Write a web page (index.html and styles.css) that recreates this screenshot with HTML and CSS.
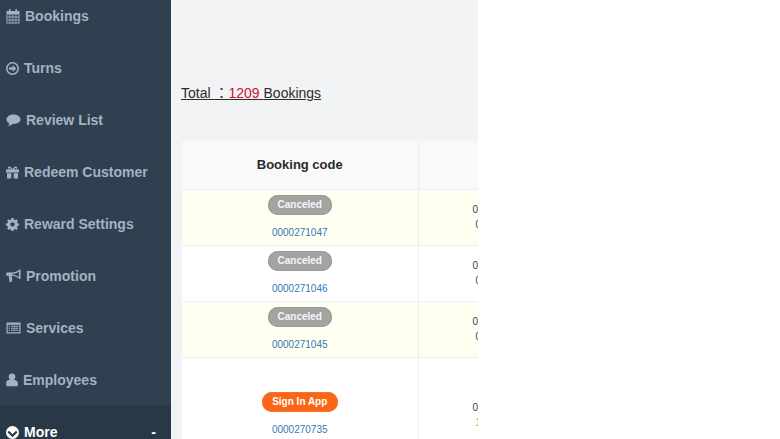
FILE: index.html
```html
<!DOCTYPE html>
<html lang="en">
<head>
<meta charset="utf-8">
<title>Bookings</title>
<link rel="stylesheet" href="styles.css">
</head>
<body>
<div class="page">
  <nav class="sidebar">
    <a class="nav-item"><svg class="ico wide" viewBox="0 0 14 15"><path fill="currentColor" fill-rule="evenodd" d="M3 0h1.500v2h5V0H11v2h2.500v12.500H.5V2H3zM1.300 5.500v2h2.300v-2zm3 0v2h2.300v-2zm3 0v2h2.300v-2zm3 0v2h2.300v-2zm-9 3v2h2.300v-2zm3 0v2h2.300v-2zm3 0v2h2.300v-2zm3 0v2h2.300v-2zm-9 3v2h2.300v-2zm3 0v2h2.300v-2zm3 0v2h2.300v-2zm3 0v2h2.300v-2z"/></svg><span>Bookings</span></a>
    <a class="nav-item"><svg class="ico" viewBox="0 0 13 13"><path fill="currentColor" fill-rule="evenodd" d="M6.500 0a6.500 6.500 0 1 1 0 13 6.500 6.500 0 0 1 0-13zm0 1.600a4.900 4.900 0 1 0 0 9.800 4.900 4.900 0 0 0 0-9.800zM6.700 3l3.500 3.500L6.700 10V7.700H3V5.300h3.700z"/></svg><span>Turns</span></a>
    <a class="nav-item"><svg class="ico bubble" viewBox="0 0 15 14"><path fill="currentColor" d="M7.500 1.500c4 0 7 2.200 7 4.800S11.500 11 7.500 11H6.500c-1 1-2.500 1.700-4.500 2 .8-.8 1.200-1.600 1.300-2.600C1.500 9.600.5 8 .5 6.300.5 3.700 3.500 1.500 7.500 1.500z"/></svg><span>Review List</span></a>
    <a class="nav-item"><svg class="ico" viewBox="0 0 13 13"><path fill="currentColor" fill-rule="evenodd" d="M0 3.500h3.200C2 3 1.500 2.300 1.800 1.500c.4-1 1.700-1.200 2.700-.5.700.5 1.600 1.500 2 2.200.4-.7 1.300-1.700 2-2.200 1-.7 2.300-.5 2.700.5.300.8-.2 1.500-1.400 2H13v3H0zM3.200 2c-.4 0-.6.500-.2.900.3.300 1.100.5 2 .6C4.600 2.700 4 2 3.200 2zm6.600 0C9 2 8.400 2.700 8 3.500c.9-.1 1.700-.3 2-.6.400-.4.200-.9-.2-.9zM1 7.300h4.300V12.500H1zm6.700 0H12v5.200H7.700z"/></svg><span>Redeem Customer</span></a>
    <a class="nav-item"><svg class="ico" viewBox="0 0 14 14"><path fill="currentColor" fill-rule="evenodd" d="M5.700 0h2.600l.4 2 1.200.5 1.700-1.100 1.800 1.800-1.100 1.700.5 1.200 2 .4v2.600l-2 .4-.5 1.200 1.100 1.700-1.800 1.800-1.700-1.100-1.200.5-.4 2H5.700l-.4-2-1.200-.5-1.700 1.100L.6 12.400l1.100-1.700-.5-1.200-2-.4V6.500l2-.4.500-1.200L.6 3.200l1.800-1.800 1.700 1.100 1.200-.5zM7 4.900a2.600 2.600 0 1 0 0 5.200 2.600 2.600 0 0 0 0-5.200z" transform="translate(.7 .1) scale(.9)"/></svg><span>Reward Settings</span></a>
    <a class="nav-item"><svg class="ico bubble" viewBox="0 0 15 14"><path fill="currentColor" fill-rule="evenodd" d="M13.500 .5h1v9.500h-1c-2-2-5-3-8-3.200l.8 3.700-.8 2.500H3.500L2.700 6.700H1c-.5 0-.8-.4-.8-.8V4.200c0-.5.300-.8.800-.8h4.500c3 0 6-1 8-2.900zm-.6 1.900C11.300 3.800 9 4.600 6.500 4.800v1c2.500.2 4.800 1 6.400 2.400z"/></svg><span>Promotion</span></a>
    <a class="nav-item"><svg class="ico bubble" viewBox="0 0 15 14"><path fill="currentColor" fill-rule="evenodd" d="M.5 1.500h14v11H.5zm1.200 2.300v7.500h11.600V3.800zm1 1H4v1H2.700zm2.300 0h7.300v1H5zm-2.300 2H4v1H2.700zm2.300 0h7.300v1H5zm-2.300 2H4v1H2.700zm2.300 0h7.300v1H5z"/></svg><span>Services</span></a>
    <a class="nav-item"><svg class="ico narrow" viewBox="0 0 12 14"><path fill="currentColor" d="M6 .5a3.300 3.300 0 0 1 3.300 3.400c0 1.100-.5 2.100-1.300 2.800 2.100.3 3.800 1.400 3.800 3.400v2.300c0 .5-.4.900-1 .9H1.200c-.6 0-1-.4-1-.9V10c0-2 1.700-3.100 3.800-3.400-.8-.7-1.300-1.700-1.300-2.800A3.300 3.300 0 0 1 6 .5z"/></svg><span>Employees</span></a>
    <a class="nav-item is-open"><svg class="ico" viewBox="0 0 13 13"><path fill="currentColor" fill-rule="evenodd" d="M6.500 0a6.500 6.500 0 1 1 0 13 6.500 6.500 0 0 1 0-13zM3 4.700 1.500 6.200l5 5 5-5L10 4.700 6.500 8.200z"/></svg><span>More</span><b class="minus">-</b></a>
  </nav>
  <main class="content">
    <p class="total"><u>Total <span class="colon">：</span><span class="count">1209 </span>Bookings</u></p>
    <table class="grid">
      <thead>
        <tr><th class="col-code">Booking code</th><th class="col-next"></th></tr>
      </thead>
      <tbody>
        <tr class="row tint">
          <td class="col-code"><span class="pill grey">Canceled</span><a class="code">0000271047</a></td>
          <td class="col-next"><div class="cut">0</div><div class="cut second">0</div></td>
        </tr>
        <tr class="row">
          <td class="col-code"><span class="pill grey">Canceled</span><a class="code">0000271046</a></td>
          <td class="col-next"><div class="cut">0</div><div class="cut second">0</div></td>
        </tr>
        <tr class="row tint">
          <td class="col-code"><span class="pill grey">Canceled</span><a class="code">0000271045</a></td>
          <td class="col-next"><div class="cut">0</div><div class="cut second">0</div></td>
        </tr>
        <tr class="row tall">
          <td class="col-code"><span class="pill orange">Sign In App</span><a class="code">0000270735</a></td>
          <td class="col-next"><div class="cut">0</div><div class="cut second amber">1</div></td>
        </tr>
      </tbody>
    </table>
  </main>
  <div class="blank"></div>
</div>
</body>
</html>
```
FILE: styles.css
```css
* { box-sizing: border-box; }
html, body { margin: 0; height: 100%; overflow: hidden; background: #fff; }
body { font-family: "Liberation Sans", Arial, sans-serif; }
.page { display: flex; width: 780px; height: 439px; overflow: hidden; }

.sidebar { width: 171px; flex: none; height: 439px; overflow: hidden; background: #2f4050; display: flex; flex-direction: column; }
.nav-item { flex: none; height: 52px; display: flex; align-items: center; gap: 5px; padding: 0 6px; color: #a7b1c2; font-size: 14px; font-weight: 700; }
.nav-item:first-child { margin-top: -10px; }
.ico { width: 13px; height: 13px; flex: none; }
.ico.wide { width: 14px; height: 15px; }
.ico.bubble { width: 15px; height: 14px; }
.ico.narrow { width: 12px; height: 14px; }
.is-open { color: #fff; background: #293846; }
.minus { margin-left: auto; margin-right: 9px; }

.content { width: 307px; flex: none; background: #f1f3f5; padding: 0 0 0 10px; overflow: hidden; }
.total { margin: 84px 0 0; height: 17px; font-size: 14px; line-height: 17px; color: #2b2b2b; white-space: nowrap; }
.colon { font-family: "Noto Sans CJK TC", sans-serif; }
.count { color: #d0112b; }
.grid { margin: 40px 0 0 1px; width: 400px; table-layout: fixed; border-collapse: collapse; background: #fff; font-size: 10px; color: #676a6c; }
.grid th { height: 48px; background: #f9f9f9; border-bottom: 1px solid #eee; border-right: 1px solid #eee; font-size: 13px; color: #2a2a2a; font-weight: 700; text-align: center; padding: 0; }
.col-code { width: 236px; }
.grid td { text-align: center; padding: 0; border-bottom: 1px solid #eee; border-right: 1px solid #eee; vertical-align: top; }
.row { height: 56px; }
.tint td { background: #fffff1; }
.tall { height: 90px; }
.tall .pill { margin-top: 34px; }
.tall .cut:first-child { margin-top: 42px; }
.pill { display: block; width: max-content; margin: 5px auto 0; padding: 0 10px; height: 20px; line-height: 20px; border-radius: 10px; color: #fff; font-size: 10px; font-weight: 700; }
.grey { background: #a3a3a3; box-shadow: inset 0 0 0 1px #999; color: #f6f6f6; }
.orange { background: #fb6516; padding: 0 10.500px; box-shadow: inset 0 0 0 1px #f4742c; }
.code { display: block; margin-top: 11px; line-height: 14px; color: #337ab7; font-size: 10px; }
.cut { text-align: left; padding-left: 54px; font-size: 10px; line-height: 15px; color: #444; }
.cut:first-child { margin-top: 12px; }
.second { padding-left: 57px; }
.amber { color: #b8860b; }

.blank { flex: 1; background: #fff; }
```
